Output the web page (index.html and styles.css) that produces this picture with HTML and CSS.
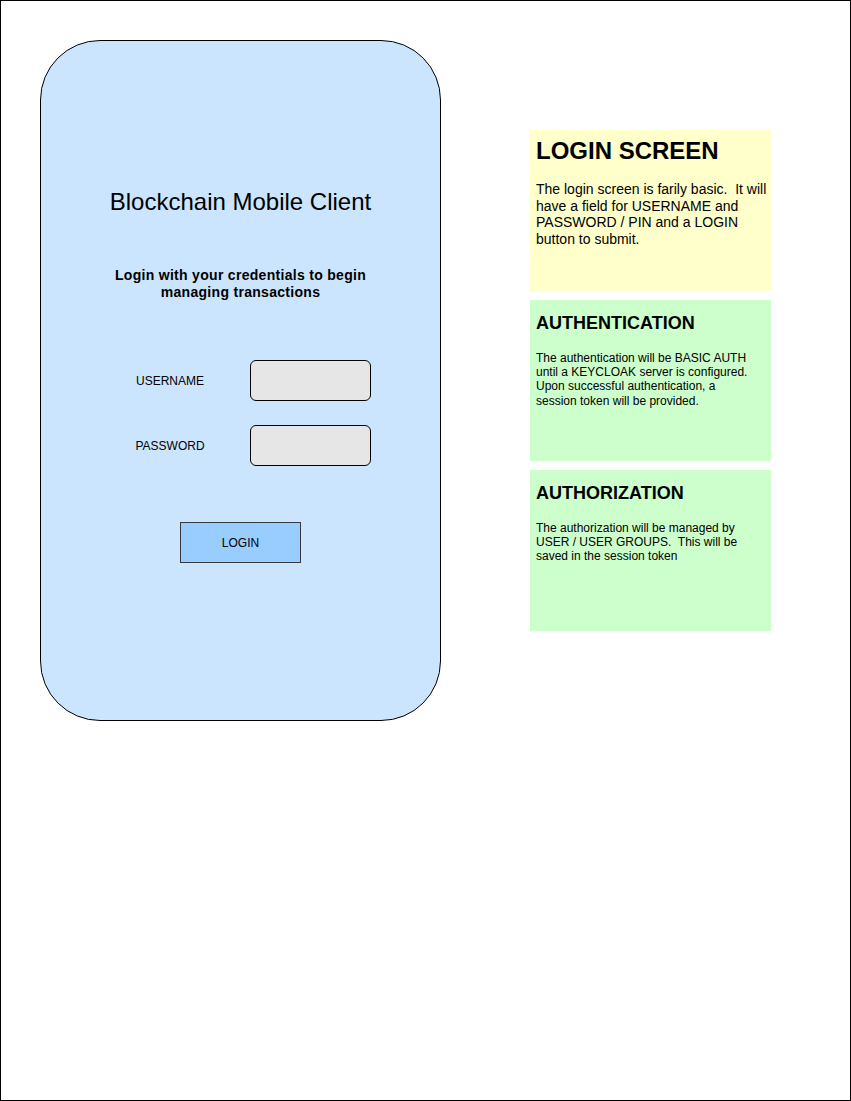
FILE: index.html
```html
<!DOCTYPE html>
<html lang="en">
<head>
    <meta charset="UTF-8">
    <meta name="viewport" content="width=device-width, initial-scale=1.0">
    <title>Blockchain Mobile Client - Login Screen</title>
    <link rel="stylesheet" href="styles.css">
</head>
<body>

    <div class="page">

        <!-- Mockup del telefono -->
        <section class="phone">
            <h1 class="app-title">Blockchain Mobile Client</h1>
            <p class="app-subtitle">Login with your credentials to begin<br>managing transactions</p>

            <form class="login-form">
                <div class="field">
                    <label for="username">USERNAME</label>
                    <input type="text" id="username" class="field-input">
                </div>
                <div class="field">
                    <label for="password">PASSWORD</label>
                    <input type="password" id="password" class="field-input">
                </div>
                <button type="submit" class="login-btn">LOGIN</button>
            </form>
        </section>

        <!-- Notas -->
        <aside class="notes">
            <div class="note note-yellow">
                <h2 class="note-title-big">LOGIN SCREEN</h2>
                <p class="note-text-big">The login screen is farily basic.&nbsp; It will<br>have a field for USERNAME and<br>PASSWORD / PIN and a LOGIN<br>button to submit.</p>
            </div>

            <div class="note note-green">
                <h2 class="note-title">AUTHENTICATION</h2>
                <p class="note-text">The authentication will be BASIC AUTH<br>until a KEYCLOAK server is configured.<br>Upon successful authentication, a<br>session token will be provided.</p>
            </div>

            <div class="note note-green">
                <h2 class="note-title">AUTHORIZATION</h2>
                <p class="note-text">The authorization will be managed by<br>USER / USER GROUPS.&nbsp; This will be<br>saved in the session token</p>
            </div>
        </aside>

    </div>

</body>
</html>
```

FILE: styles.css
```css
body {
    margin: 0;
    padding: 0;
    background-color: #ffffff;
    font-family: "Liberation Sans", Arial, sans-serif;
    color: #000000;
}

.page {
    width: 851px;
    height: 1101px;
    box-sizing: border-box;
    border: 1px solid #000000;
    padding: 39px;
    display: flex;
    align-items: flex-start;
    gap: 89px;
}

/* Telefono */
.phone {
    width: 401px;
    height: 681px;
    box-sizing: border-box;
    flex-shrink: 0;
    border: 1px solid #000000;
    border-radius: 60px;
    background-color: #cce5ff;
    padding-top: 147px;
    text-align: center;
}

.app-title {
    margin: 0;
    font-size: 24px;
    font-weight: normal;
    line-height: 1.2;
}

.app-subtitle {
    margin: 50px 0 0;
    font-size: 14px;
    font-weight: bold;
    line-height: 1.2;
    letter-spacing: 0.3px;
}

.login-form {
    margin-top: 60px;
}

.field {
    display: flex;
    align-items: center;
    margin-left: 79px;
    margin-bottom: 24px;
}

.field label {
    width: 100px;
    font-size: 12px;
    text-align: center;
}

.field-input {
    width: 121px;
    height: 41px;
    box-sizing: border-box;
    margin: 0 0 0 30px;
    padding: 0 8px;
    border: 1px solid #000000;
    border-radius: 6px;
    background-color: #e6e6e6;
}

.login-btn {
    display: block;
    width: 121px;
    height: 41px;
    margin: 56px auto 0;
    border: 1px solid #36393d;
    border-radius: 0;
    background-color: #99ccff;
    font-family: "Liberation Sans", Arial, sans-serif;
    font-size: 12px;
    color: #000000;
}

/* Notas */
.notes {
    margin-top: 90px;
    display: flex;
    flex-direction: column;
    gap: 9px;
}

.note {
    width: 241px;
    height: 161px;
    box-sizing: border-box;
    padding: 7px 2px 0 6px;
}

.note-yellow {
    background-color: #ffffcc;
}

.note-green {
    background-color: #ccffcc;
    padding-top: 13px;
}

.note-title-big {
    margin: 0;
    font-size: 24px;
    line-height: 1.2;
}

.note-text-big {
    margin: 15px 0 0;
    font-size: 14px;
    line-height: 1.2;
}

.note-title {
    margin: 0;
    font-size: 18px;
    line-height: 1.2;
}

.note-text {
    margin: 16px 0 0;
    font-size: 12px;
    line-height: 1.2;
}
```
